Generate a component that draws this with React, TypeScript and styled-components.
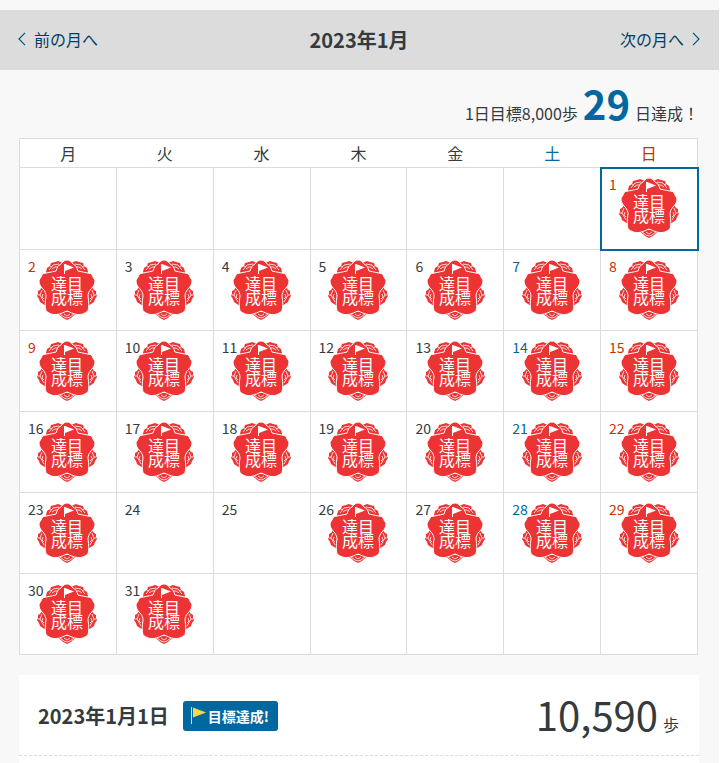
import React, { useState } from "react";
import styled, { createGlobalStyle } from "styled-components";

const GlobalStyle = createGlobalStyle`
  *, *::before, *::after { box-sizing: border-box; }
  body {
    margin: 0;
    background: #fff;
    color: #333b3e;
    font-family: "Noto Sans CJK JP", sans-serif;
    font-size: 16px;
    line-height: 24px;
  }
`;

type Tone = "weekday" | "saturday" | "holiday";

const toneColor: Record<Tone, string> = {
  weekday: "#333b3e",
  saturday: "#0068a0",
  holiday: "#cc2f00",
};

const holidays = [2, 9];

const toneOf = (column: number, day: number | null = null): Tone =>
  column === 6 || (day !== null && holidays.includes(day))
    ? "holiday"
    : column === 5
      ? "saturday"
      : "weekday";

const Page = styled.main`
  margin-right: 6px;
  padding-top: 10px;
  background: #f8f8f8;
`;

const MonthBar = styled.nav`
  display: grid;
  grid-template-columns: 1fr auto 1fr;
  align-items: center;
  height: 60px;
  padding: 0 19px 0 18px;
  background: #dcdcdc;
`;

const MonthTitle = styled.h1`
  margin: 0;
  font-size: 20px;
  font-weight: 700;
`;

const MonthLink = styled.a<{ $end?: boolean }>`
  display: flex;
  align-items: center;
  gap: 8px;
  padding-bottom: 2px;
  justify-self: ${(p) => (p.$end ? "end" : "start")};
  color: #003f60;
  text-decoration: none;
`;

const Content = styled.div`
  padding: 0 20px 0 19px;
`;

const Summary = styled.p`
  display: flex;
  justify-content: flex-end;
  align-items: baseline;
  gap: 5px;
  height: 68px;
  margin: 0;
  padding-top: 3px;
  line-height: 60px;
`;

const SummaryCount = styled.strong`
  color: #0068a0;
  font-size: 40px;
  font-weight: 700;
`;

const Calendar = styled.table`
  width: calc(100% - 1px);
  border-collapse: collapse;
  table-layout: fixed;
  background: #fff;
`;

const WeekdayCell = styled.th<{ $tone: Tone }>`
  height: 29px;
  padding: 0 0 1px;
  border: 1px solid #dcdcdc;
  border-width: 1px 0;
  color: ${(p) => toneColor[p.$tone]};
  font-weight: 400;

  &:first-child { border-left-width: 1px; }
  &:last-child { border-right-width: 1px; }
`;

const Week = styled.tr`
  height: 81px;

  &:first-child { height: 82px; }
`;

const DayCell = styled.td<{ $selected: boolean }>`
  padding: 0;
  border: 1px solid #dcdcdc;
  outline: ${(p) => (p.$selected ? "2px solid #0068a0" : "none")};
  outline-offset: -1px;
  vertical-align: top;
`;

const DayButton = styled.button<{ $tone: Tone }>`
  display: grid;
  width: 100%;
  height: 80px;
  padding: 0;
  border: 0;
  background: none;
  color: ${(p) => toneColor[p.$tone]};
  font: inherit;
  font-size: 14px;
  cursor: pointer;

  > * { grid-area: 1 / 1; }
`;

const DayNumber = styled.span`
  place-self: start;
  padding: 4px 8px;
`;

const Seal = styled.svg`
  place-self: center;
  width: 60px;
  height: 60px;
  margin-right: 1px;
  overflow: visible;
`;

const DetailCard = styled.section`
  margin-top: 20px;
  padding-bottom: 20px;
  background: #fff;
`;

const DetailHeader = styled.header`
  display: flex;
  align-items: center;
  gap: 14px;
  height: 81px;
  padding: 0 20px 0 19px;
  border-bottom: 1px dashed #dcdcdc;
`;

const DetailDate = styled.h2`
  margin: 0;
  padding-top: 2px;
  font-size: 20px;
  font-weight: 700;
`;

const Badge = styled.span`
  display: flex;
  align-items: center;
  gap: 2px;
  height: 30px;
  padding: 0 9px 0 8px;
  border-radius: 3px;
  margin-top: 2px;
  background: #0068a0;
  color: #fff;
  font-size: 14px;
  font-weight: 700;
`;

const Steps = styled.p`
  display: flex;
  align-items: baseline;
  gap: 5px;
  margin: 0 0 0 auto;
  padding-top: 8px;
  line-height: 60px;
`;

const StepCount = styled.span`
  font-size: 40px;
`;

const Chevron = ({ right = false }: { right?: boolean }) => (
  <svg width="8" height="14" viewBox="0 0 8 14" fill="none" stroke="#0b5575" strokeWidth="1.2" aria-hidden="true">
    <path d={right ? "M1 .8 7 7 1 13.2" : "M7 .8 1 7 7 13.2"} />
  </svg>
);

const Flag = () => (
  <svg width="15" height="20" viewBox="0 0 15 20" aria-hidden="true">
    <path d="M.5 1v17" stroke="#e8df8c" fill="none" />
    <path d="M2 1.5 15 6.5 2 11.5Z" fill="#f5d84b" />
  </svg>
);

const SidePetals = () => (
  <>
    <g fill="#ec3434">
      <path d="M9 12L10 8L13 6L14 3L18 2L21 1L26 3L22 14L10 17Z" />
      <path d="M5 27L3 30L1 31L1 34L0 36L2 39L3 42L6 44L9 46L12 36Z" />
    </g>
    <g fill="none" stroke="#fff" strokeWidth=".8">
      <path d="M12 10L16 5L22 4M15 9L18 7L21 7M13 6L15 7" />
      <path d="M5 30L3 35L7 42M6 34L5 37L7 39M1 35L3 35" />
    </g>
  </>
);

const AchievedSeal = () => (
  <Seal viewBox="0 0 60 60" role="img" aria-label="目標達成">
    <SidePetals />
    <g transform="matrix(-1 0 0 1 60 0)">
      <SidePetals />
    </g>
    <path d="M19 52L21 54L24 56L26 58L30 60L34 58L36 56L39 54L41 52Z" fill="#ec3434" />
    <path d="M23 54L27 57L30 58L33 57L37 54M27 54L30 56L33 54" fill="none" stroke="#fff" strokeWidth=".8" />
    <path
      d="M19 11C20 8 21 5 24 4C26 1 28 0 30 0C32 0 34 1 36 4C39 5 40 8 41 11C46 12 50 13 54 13.5C56 16 56 18 58 20C58 24 57 26 54 29C52 31 51 34 51 36C52 42 52 47 51 51C47 54 44 55 40 54.5C36 54 33 52 30 51C27 52 24 54 20 54.5C16 55 13 54 9 51C8 47 8 42 9 36C9 34 8 31 6 29C3 26 2 24 2 20C4 18 4 16 6 13.5C10 13 14 12 19 11Z"
      fill="#ec3434"
      stroke="#fff"
      strokeWidth="1"
    />
    <path d="M27.5 4v10" stroke="#fff" fill="none" />
    <path d="m28 4 9 3.5-9 3.5Z" fill="#fff" />
    <text fill="#fff" fontSize="16" fontWeight="400" textAnchor="middle">
      <tspan x="30" y="30">達目</tspan>
      <tspan x="30" y="44">成標</tspan>
    </text>
  </Seal>
);

const weekdays = ["月", "火", "水", "木", "金", "土", "日"];
const leadingBlanks = 6;
const daysInMonth = 31;
const missedDays = [24, 25];

const weeks = Array.from({ length: 6 }, (_, week) =>
  Array.from({ length: 7 }, (_, column) => {
    const day = week * 7 + column - leadingBlanks + 1;
    return day >= 1 && day <= daysInMonth ? day : null;
  })
);

export default function App() {
  const [selected, setSelected] = useState(1);
  return (
    <>
      <GlobalStyle />
      <Page>
        <MonthBar aria-label="月の移動">
          <MonthLink href="#previous"><Chevron />前の月へ</MonthLink>
          <MonthTitle>2023年1月</MonthTitle>
          <MonthLink href="#next" $end>次の月へ<Chevron right /></MonthLink>
        </MonthBar>
        <Content>
          <Summary>
            <span>1日目標8,000歩</span>
            <SummaryCount>29</SummaryCount>
            <span>日達成！</span>
          </Summary>
          <Calendar>
            <thead>
              <tr>
                {weekdays.map((name, column) => (
                  <WeekdayCell key={name} scope="col" $tone={toneOf(column)}>{name}</WeekdayCell>
                ))}
              </tr>
            </thead>
            <tbody>
              {weeks.map((week, index) => (
                <Week key={index}>
                  {week.map((day, column) => (
                    <DayCell key={column} $selected={day === selected}>
                      {day !== null && (
                        <DayButton type="button" $tone={toneOf(column, day)} onClick={() => setSelected(day)}>
                          <DayNumber>{day}</DayNumber>
                          {!missedDays.includes(day) && <AchievedSeal />}
                        </DayButton>
                      )}
                    </DayCell>
                  ))}
                </Week>
              ))}
            </tbody>
          </Calendar>
          <DetailCard>
            <DetailHeader>
              <DetailDate>2023年1月{selected}日</DetailDate>
              <Badge><Flag />目標達成!</Badge>
              <Steps><StepCount>10,590</StepCount>歩</Steps>
            </DetailHeader>
          </DetailCard>
        </Content>
      </Page>
    </>
  );
}
